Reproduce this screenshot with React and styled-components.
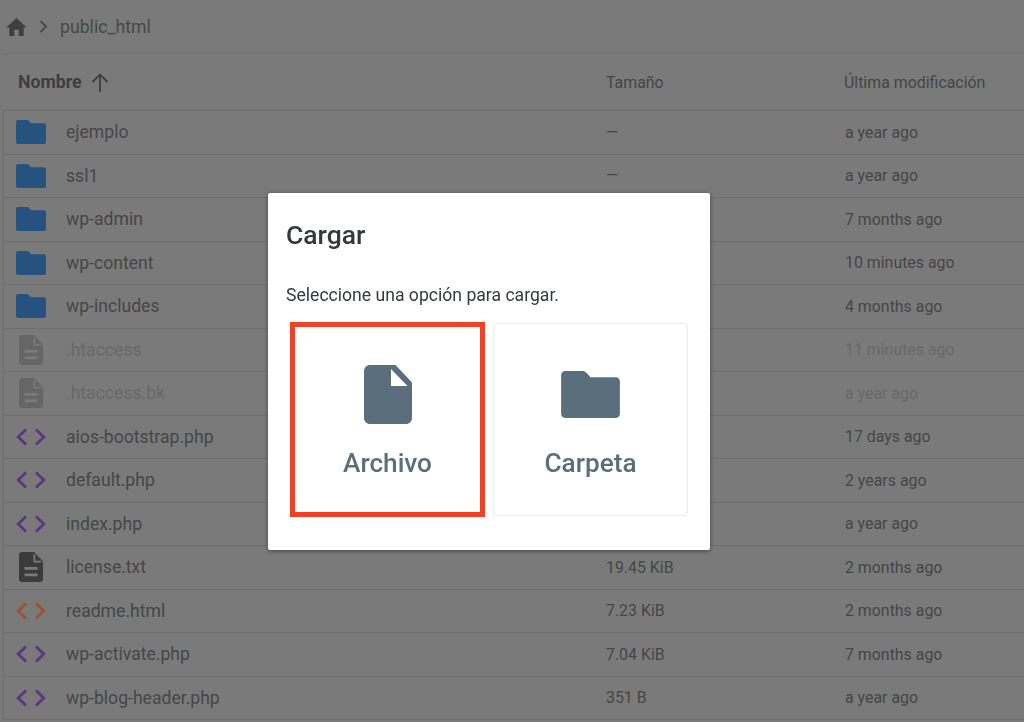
import React from "react";
import styled, { createGlobalStyle } from "styled-components";

const Global = createGlobalStyle`
	html, body {
		margin: 0;
		padding: 0;
		height: 100%;
		overflow: hidden;
		background: #7a7a7a;
		font-family: Roboto, "Liberation Sans", sans-serif;
	}
`;

const Page = styled.div`
	height: 722px;
	overflow: hidden;
`;

const Breadcrumb = styled.div`
	height: 53px;
	margin-left: 4px;
	padding-left: 2px;
	border-bottom: 1px solid #737373;
	display: flex;
	align-items: center;
	font-size: 17.7px;
	color: #484848;
	svg {
		display: block;
	}
`;

const Crumb = styled.span`
	margin-left: 12px;
`;

const HeaderRow = styled.div`
	height: 56px;
	display: flex;
	align-items: center;
	font-size: 15.9px;
	color: #454545;
`;

const NameHead = styled.div`
	width: 606px;
	padding-left: 18px;
	box-sizing: border-box;
	display: flex;
	align-items: center;
	gap: 9px;
	font-size: 17.7px;
	font-weight: 700;
	color: #3e3e3e;
`;

const SizeHead = styled.div`
	width: 238px;
`;

const List = styled.div`
	margin-left: 3px;
	border-top: 1px solid #6e6e6e;
	border-left: 1px solid #6e6e6e;
`;

const Row = styled.div`
	height: 42.5px;
	border-bottom: 1px solid #6e6e6e;
	display: flex;
	align-items: center;
	font-size: 17.6px;
	color: ${(p) => (p.$hidden ? "#696969" : "#464646")};
`;

const IconCell = styled.div`
	width: 62px;
	padding-left: ${(p) => (p.$doc ? 15 : 12)}px;
	box-sizing: border-box;
	display: flex;
	align-items: center;
	svg {
		display: block;
	}
`;

const NameCell = styled.div`
	width: 540px;
`;

const SizeCell = styled.div`
	width: 239px;
	font-size: 15.9px;
`;

const DateCell = styled.div`
	font-size: 15.9px;
`;

const ModalLayer = styled.div`
	position: fixed;
	inset: 0;
	padding: 193px 0 0 268px;
`;

const Modal = styled.div`
	width: 442px;
	height: 357px;
	box-sizing: border-box;
	padding: 27px 22px 0 18px;
	background: #fff;
	border-radius: 2px;
	box-shadow: 0 1px 4px rgba(0, 0, 0, 0.45);
`;

const Title = styled.h2`
	margin: 0;
	font-size: 26.5px;
	line-height: 30px;
	font-weight: 500;
	color: #36393b;
`;

const Text = styled.p`
	margin: 35px 0 0;
	font-size: 17.6px;
	line-height: 20px;
	color: #36393b;
`;

const Cards = styled.div`
	margin: 17px 0 0 4px;
	display: flex;
	align-items: flex-start;
	gap: 8px;
`;

const Card = styled.div`
	width: 195px;
	height: ${(p) => (p.$selected ? 195 : 193)}px;
	margin-top: ${(p) => (p.$selected ? 0 : 1)}px;
	box-sizing: border-box;
	border: ${(p) => (p.$selected ? "5px solid #f04124" : "1px solid #ececec")};
	border-radius: ${(p) => (p.$selected ? 0 : 4)}px;
	display: flex;
	flex-direction: column;
	align-items: center;
	color: #5a6e7b;
	svg {
		display: block;
	}
`;

const CardIcon = styled.div`
	height: 59px;
	margin-top: ${(p) => p.$top}px;
	display: flex;
	align-items: center;
`;

const CardLabel = styled.div`
	margin-top: 24px;
	font-size: 26.2px;
	line-height: 30px;
	font-weight: 500;
`;

const HomeIcon = () => (
	<svg width="21" height="18" viewBox="0 0 21 18">
		<path fill="#3f3f3f" d="M8.300 18v-6.300h4.400V18h5V9.500h3L10.500 0 .3 9.500h3V18z" />
	</svg>
);

const Chevron = () => (
	<svg width="9" height="13" viewBox="0 0 9 13" style={{ marginLeft: 12 }}>
		<path fill="none" stroke="#484848" strokeWidth="1.8" d="M1.500 1 7 6.500 1.500 12" />
	</svg>
);

const ArrowUp = () => (
	<svg width="18" height="19" viewBox="0 0 18 19">
		<path fill="none" stroke="#3e3e3e" strokeWidth="1.8" d="M9 19V1.500M1.500 9 9 1.500 16.500 9" />
	</svg>
);

const FolderShape = ({ width, height, color }) => (
	<svg width={width} height={height} viewBox="0 0 30 24">
		<path
			fill={color}
			d="M2 0h9c.8 0 1.300.3 1.800.8L15 3.200h13c1.100 0 2 .9 2 2V22c0 1.100-.9 2-2 2H2c-1.100 0-2-.9-2-2V2C0 .9.900 0 2 0z"
		/>
	</svg>
);

const DocShape = ({ color, cut }) => (
	<svg width="24" height="30" viewBox="0 0 24 30">
		<path
			fill={color}
			d="M3 0h12l9 9.500V27c0 1.700-1.300 3-3 3H3c-1.700 0-3-1.300-3-3V3c0-1.700 1.300-3 3-3z"
		/>
		<path fill={cut} d="M14.500 1.500v9h8.500l-1.500-1.800h-5.200V3.300zM5.500 15h13v2.700h-13zM5.500 21.500h13v2.700h-13z" />
	</svg>
);

const CodeIcon = ({ color }) => (
	<svg width="30" height="18" viewBox="0 0 30 18">
		<path
			fill="none"
			stroke={color}
			strokeWidth="2.800"
			d="M10 1.500 2.200 9l7.800 7.500M20 1.500 27.800 9 20 16.500"
		/>
	</svg>
);

const BigFile = () => (
	<svg width="48" height="59" viewBox="0 0 48 59">
		<path
			fill="#5a6e7b"
			d="M6 0h25.500L48 17.500V53c0 3.300-2.700 6-6 6H6c-3.300 0-6-2.700-6-6V6c0-3.300 2.700-6 6-6z"
		/>
		<path fill="#fff" d="M27 4v17h16.500z" />
	</svg>
);

const files = [
	{ name: "ejemplo", type: "folder", size: "—", date: "a year ago" },
	{ name: "ssl1", type: "folder", size: "—", date: "a year ago" },
	{ name: "wp-admin", type: "folder", size: "—", date: "7 months ago" },
	{ name: "wp-content", type: "folder", size: "—", date: "10 minutes ago" },
	{ name: "wp-includes", type: "folder", size: "—", date: "4 months ago" },
	{ name: ".htaccess", type: "hidden", size: "", date: "11 minutes ago" },
	{ name: ".htaccess.bk", type: "hidden", size: "", date: "a year ago" },
	{ name: "aios-bootstrap.php", type: "php", size: "", date: "17 days ago" },
	{ name: "default.php", type: "php", size: "", date: "2 years ago" },
	{ name: "index.php", type: "php", size: "", date: "a year ago" },
	{ name: "license.txt", type: "txt", size: "19.45 KiB", date: "2 months ago" },
	{ name: "readme.html", type: "html", size: "7.23 KiB", date: "2 months ago" },
	{ name: "wp-activate.php", type: "php", size: "7.04 KiB", date: "7 months ago" },
	{ name: "wp-blog-header.php", type: "php", size: "351 B", date: "a year ago" },
];

function FileIcon({ type }) {
	if (type === "folder") return <FolderShape width={30} height={24} color="#26527f" />;
	if (type === "hidden") return <DocShape color="#666666" cut="#7a7a7a" />;
	if (type === "txt") return <DocShape color="#3b3b3b" cut="#7a7a7a" />;
	if (type === "html") return <CodeIcon color="#9c5331" />;
	return <CodeIcon color="#5c3583" />;
}

export default function App() {
	return (
		<>
			<Global />
			<Page>
				<Breadcrumb>
					<HomeIcon />
					<Chevron />
					<Crumb>public_html</Crumb>
				</Breadcrumb>
				<HeaderRow>
					<NameHead>
						Nombre <ArrowUp />
					</NameHead>
					<SizeHead>Tamaño</SizeHead>
					<div>Última modificación</div>
				</HeaderRow>
				<List>
					{files.map((f) => (
						<Row key={f.name} $hidden={f.type === "hidden"}>
							<IconCell $doc={f.type === "hidden" || f.type === "txt"}>
								<FileIcon type={f.type} />
							</IconCell>
							<NameCell>{f.name}</NameCell>
							<SizeCell>{f.size}</SizeCell>
							<DateCell>{f.date}</DateCell>
						</Row>
					))}
				</List>
			</Page>
			<ModalLayer>
				<Modal>
					<Title>Cargar</Title>
					<Text>Seleccione una opción para cargar.</Text>
					<Cards>
						<Card $selected>
							<CardIcon $top={38}>
								<BigFile />
							</CardIcon>
							<CardLabel>Archivo</CardLabel>
						</Card>
						<Card>
							<CardIcon $top={41}>
								<FolderShape width={59} height={47} color="#5a6e7b" />
							</CardIcon>
							<CardLabel>Carpeta</CardLabel>
						</Card>
					</Cards>
				</Modal>
			</ModalLayer>
		</>
	);
}
